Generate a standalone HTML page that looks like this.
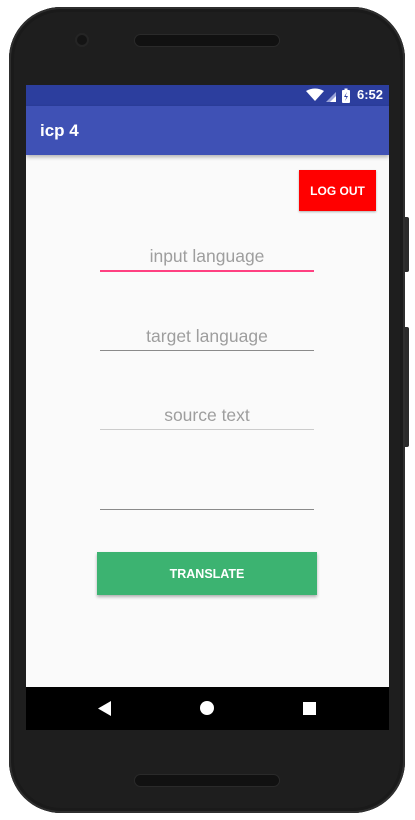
<!DOCTYPE html>
<html><head><meta charset="utf-8">
<style>
html,body{margin:0;padding:0;background:#fff;width:415px;height:820px;overflow:hidden;font-family:"Liberation Sans",sans-serif}
.abs{position:absolute}
.body{left:9px;top:7px;width:396px;height:806px;background:#1e1e1e;border-radius:52px;box-shadow:inset 0 0 0 2px #2e2e2e,inset 0 0 0 5px #1a1a1a}
.screen{left:26px;top:85px;width:363px;height:645px;background:#fafafa;overflow:hidden}
.line{left:100px;width:214px;height:1px;background:#8a8a8a}
.ph{left:100px;width:214px;text-align:center;color:#9e9e9e;font-size:17.5px}
</style></head><body>
<div class="abs body"></div>
<div class="abs" style="left:405px;top:217px;width:4px;height:55px;background:#2a2a2a;border-radius:0 2px 2px 0"></div>
<div class="abs" style="left:405px;top:327px;width:4px;height:120px;background:#2a2a2a;border-radius:0 2px 2px 0"></div>
<div class="abs" style="left:77px;top:35px;width:10px;height:10px;border-radius:50%;background:#141414;box-shadow:0 0 0 2px #252525"></div>
<div class="abs" style="left:135px;top:35px;width:144px;height:11px;border-radius:6px;background:#111;box-shadow:0 0 0 1px #2a2a2a"></div>
<div class="abs" style="left:135px;top:775px;width:144px;height:11px;border-radius:6px;background:#111;box-shadow:0 0 0 1px #2a2a2a"></div>
<div class="abs screen">
  <div class="abs" style="left:0;top:0;width:363px;height:21px;background:#2c3e9e"></div>
  <svg class="abs" style="left:280px;top:3px" width="80" height="16">
    <path d="M0 3 Q9 -2 18 3 L9 13 Z" fill="#fff"/>
    <path d="M20 14 L30 4 L30 14 Z" fill="#9aa3d8"/>
    <path d="M24 14 L30 8 L30 14 Z" fill="#fff"/>
    <rect x="36" y="2" width="8" height="13" rx="1" fill="#fff"/>
    <rect x="38.5" y="0.5" width="3" height="2" fill="#fff"/>
    <path d="M41 4 L38 9 L40.5 9 L39 13 L42 8 L39.5 8 Z" fill="#2c3e9e"/>
  </svg>
  <div class="abs" style="left:331px;top:2px;color:#fff;font-size:13px;font-weight:bold">6:52</div>
  <div class="abs" style="left:0;top:21px;width:363px;height:49px;background:#3f51b5;box-shadow:0 2px 4px rgba(0,0,0,.3)"></div>
  <div class="abs" style="left:14px;top:36px;color:#fff;font-size:17px;font-weight:bold">icp 4</div>
  <div class="abs" style="left:273px;top:85px;width:77px;height:41px;background:#f00;box-shadow:0 1px 2px rgba(0,0,0,.3);color:#fff;font-size:12px;font-weight:bold;text-align:center;line-height:42px">LOG OUT</div>
  <div class="abs ph" style="left:74px;top:161px">input language</div>
  <div class="abs line" style="left:74px;top:185px;height:2px;background:#ff4081"></div>
  <div class="abs ph" style="left:74px;top:241px">target language</div>
  <div class="abs line" style="left:74px;top:265px"></div>
  <div class="abs ph" style="left:74px;top:320px">source text</div>
  <div class="abs line" style="left:74px;top:344px;background:#ccc"></div>
  <div class="abs line" style="left:74px;top:424px"></div>
  <div class="abs" style="left:71px;top:467px;width:220px;height:43px;background:#3cb371;box-shadow:0 2px 3px rgba(0,0,0,.3);color:#fff;font-size:12.5px;font-weight:bold;text-align:center;line-height:44px">TRANSLATE</div>
  <div class="abs" style="left:0;top:602px;width:363px;height:43px;background:#000"></div>
  <svg class="abs" style="left:0;top:602px" width="363" height="43">
    <path d="M85 14 L85 29 L72 21.5 Z" fill="#fff"/>
    <circle cx="181" cy="21" r="7" fill="#fff"/>
    <rect x="277" y="15" width="13" height="13" fill="#fff"/>
  </svg>
</div>
</body></html>
